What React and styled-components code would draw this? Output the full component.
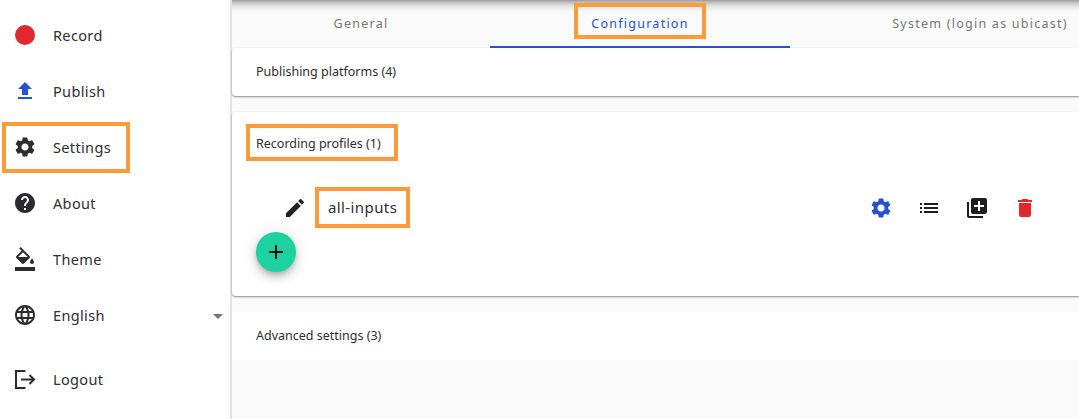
import React from "react";
import styled, { createGlobalStyle } from "styled-components";
import {
  MdFileUpload, MdSettings, MdHelp, MdFormatColorFill, MdLanguage,
  MdEdit, MdList, MdLibraryAdd, MdDelete, MdAdd,
} from "react-icons/md";

const Global = createGlobalStyle`
  html, body { margin: 0; padding: 0; height: 100%; overflow: hidden; background: #fafafa; }
  #root { height: 100%; }
  * { box-sizing: border-box; }
`;

const ORANGE = "#ff9a38";
const BLUE = "#2453d2";
const FONT = `"Noto Sans", "Open Sans", sans-serif`;

const Page = styled.div`
  display: flex; width: 1079px; height: 419px; overflow: hidden;
  font-family: ${FONT}; color: #2e2e33;
`;
const Sidebar = styled.nav`
  width: 232px; flex: none; background: #fff; border-right: 2px solid #e4e4e4;
  padding-top: 7px; display: flex; flex-direction: column;
`;
const NavItem = styled.div`
  position: relative; height: 56px; display: flex; align-items: center;
  padding-left: 13px; margin-top: ${(p) => p.$gap || 0}px;
`;
const NavIcon = styled.span`
  width: 24px; height: 24px; flex: none; margin-right: 16px; display: flex;
  align-items: center; justify-content: center; font-size: 24px;
  color: ${(p) => p.$color || "#2b2b30"};
`;
const NavLabel = styled.span`
  font-size: 14.5px; letter-spacing: 0.35px; line-height: 20px; flex: 1;
`;
const RecordDot = styled.span`
  width: 20px; height: 20px; border-radius: 50%; background: #e0282e;
`;
const Caret = styled.span`
  width: 0; height: 0; margin-right: 7px; margin-top: 2px;
  border-left: 5px solid transparent; border-right: 5px solid transparent;
  border-top: 5px solid #757575;
`;
const Mark = styled.span`
  position: absolute; border: 4px solid ${ORANGE}; pointer-events: none;
  left: ${(p) => p.$l}px; top: ${(p) => p.$t}px;
  width: ${(p) => p.$w}px; height: ${(p) => p.$h}px;
`;
const Main = styled.main`
  flex: 1; min-width: 0; position: relative; background: #fafafa;
  display: flex; flex-direction: column;
  &::before {
    content: ""; position: absolute; left: 0; right: 0; top: 0; height: 12px;
    background: linear-gradient(to bottom, #9c9c9c 0, #c8c8c8 3px, #e8e8e8 7px, #fafafa 12px);
  }
`;
const Tabs = styled.div`
  display: grid; grid-template-columns: 258px 300px 380px; height: 48px; flex: none; position: relative;
`;
const Tab = styled.div`
  position: relative; display: flex; align-items: center; justify-content: center;
  font-size: 12.5px; letter-spacing: 1.25px;
  color: ${(p) => (p.$active ? BLUE : "#77777a")};
  border-bottom: 2px solid ${(p) => (p.$active ? BLUE : "transparent")};
`;
const TabLabel = styled.span`
  position: relative; white-space: nowrap;
`;
const Panel = styled.section`
  background: #fff; border-radius: 4px 0 0 4px; margin-bottom: 16px; flex: none;
  box-shadow: ${(p) => (p.$flat ? "none" : "0 1px 2px rgba(0,0,0,.45)")};
`;
const PanelHead = styled.div`
  height: ${(p) => p.$h || 48}px; display: flex; align-items: center; padding: 0 0 2px 24px;
  font-size: 12.5px; color: #2e2e33;
`;
const HeadLabel = styled.span`
  position: relative; white-space: nowrap;
`;
const PanelBody = styled.div`
  height: 120px; padding: 12px 42px 0 51px; position: relative;
`;
const ProfileRow = styled.div`
  display: flex; align-items: center; height: 40px;
`;
const Glyph = styled.span`
  width: 24px; height: 24px; display: flex; align-items: center; justify-content: center;
  font-size: 24px; flex: none; color: ${(p) => p.$color || "#1d1d20"};
`;
const ProfileName = styled.span`
  position: relative; margin-left: 21px; padding-bottom: 2px; font-size: 15px; letter-spacing: 0.4px;
  flex: 1; color: #2e2e33;
`;
const Actions = styled.div`
  display: flex; gap: 24px;
`;
const Fab = styled.button`
  position: absolute; left: 24px; top: 56px; width: 40px; height: 40px; border: 0; padding: 0;
  border-radius: 50%; background: #1dd1a1; color: #111; font-size: 24px;
  display: flex; align-items: center; justify-content: center;
  box-shadow: 0 3px 5px -1px rgba(0,0,0,.2), 0 6px 10px rgba(0,0,0,.14), 0 1px 18px rgba(0,0,0,.12);
`;

const LogoutIcon = () => (
  <svg width="24" height="24" viewBox="0 0 24 24" fill="none" stroke="currentColor" strokeWidth="2">
    <path d="M12.5 4H3v17h9.5" />
    <path d="M8 12.5h13" />
    <path d="M16.5 8l4.5 4.5-4.5 4.5" />
  </svg>
);

export default function App() {
  return (
    <Page>
      <Global />
      <Sidebar>
        <NavItem>
          <NavIcon><RecordDot /></NavIcon>
          <NavLabel>Record</NavLabel>
        </NavItem>
        <NavItem>
          <NavIcon $color={BLUE}><MdFileUpload /></NavIcon>
          <NavLabel>Publish</NavLabel>
        </NavItem>
        <NavItem>
          <NavIcon><MdSettings /></NavIcon>
          <NavLabel>Settings</NavLabel>
          <Mark $l={2} $t={3} $w={128} $h={51} />
        </NavItem>
        <NavItem>
          <NavIcon><MdHelp /></NavIcon>
          <NavLabel>About</NavLabel>
        </NavItem>
        <NavItem>
          <NavIcon><MdFormatColorFill /></NavIcon>
          <NavLabel>Theme</NavLabel>
        </NavItem>
        <NavItem>
          <NavIcon><MdLanguage /></NavIcon>
          <NavLabel>English</NavLabel>
          <Caret />
        </NavItem>
        <NavItem $gap={8}>
          <NavIcon><LogoutIcon /></NavIcon>
          <NavLabel>Logout</NavLabel>
        </NavItem>
      </Sidebar>
      <Main>
        <Tabs>
          <Tab>General</Tab>
          <Tab $active>
            <TabLabel>
              Configuration
              <Mark $l={-17} $t={-12} $w={132} $h={36} />
            </TabLabel>
          </Tab>
          <Tab>System (login as ubicast)</Tab>
        </Tabs>
        <Panel>
          <PanelHead>Publishing platforms (4)</PanelHead>
        </Panel>
        <Panel>
          <PanelHead $h={64}>
            <HeadLabel>
              Recording profiles (1)
              <Mark $l={-10} $t={-11} $w={152} $h={37} />
            </HeadLabel>
          </PanelHead>
          <PanelBody>
            <ProfileRow>
              <Glyph $color="#222"><MdEdit /></Glyph>
              <ProfileName>
                all-inputs
                <Mark $l={-13} $t={-10} $w={95} $h={41} />
              </ProfileName>
              <Actions>
                <Glyph $color={BLUE}><MdSettings /></Glyph>
                <Glyph><MdList /></Glyph>
                <Glyph><MdLibraryAdd /></Glyph>
                <Glyph $color="#e0282e"><MdDelete /></Glyph>
              </Actions>
            </ProfileRow>
            <Fab aria-label="Add"><MdAdd /></Fab>
          </PanelBody>
        </Panel>
        <Panel $flat>
          <PanelHead>Advanced settings (3)</PanelHead>
        </Panel>
      </Main>
    </Page>
  );
}
